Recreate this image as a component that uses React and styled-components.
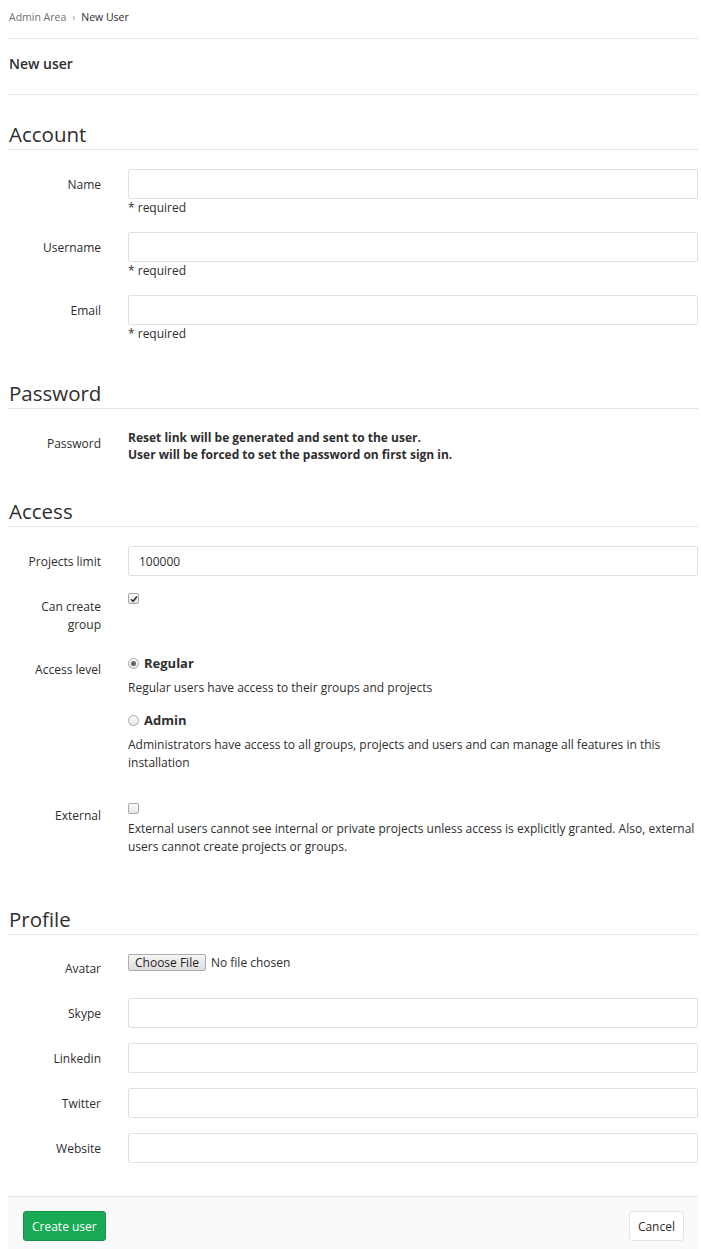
import React from 'react'
import styled, { createGlobalStyle } from 'styled-components'

const GlobalStyle = createGlobalStyle`
  body {
    margin: 0;
    background: #fff;
    color: #2e2e2e;
    font-family: 'Open Sans', 'Noto Sans', sans-serif;
    font-size: 12px;
  }
`

const Page = styled.div`
  padding: 0 3px 0 8px;
`

const Breadcrumbs = styled.div`
  display: flex;
  align-items: flex-start;
  gap: 6px;
  box-sizing: border-box;
  height: 39px;
  padding: 8px 0 0 1px;
  line-height: 18px;
  border-bottom: 1px solid #e5e5e5;
  font-size: 10.5px;
  color: #707070;

  b {
    font-weight: 400;
    color: #2e2e2e;
  }
`

const Chevron = styled.span`
  font-size: 10px;
  color: #999;
`

const PageTitle = styled.h3`
  margin: 0;
  padding: 15px 0 20px 1px;
  font-size: 14px;
  line-height: 20px;
  font-weight: 600;
  border-bottom: 1px solid #e5e5e5;
`

const Form = styled.form`
  display: flex;
  flex-direction: column;
  padding-top: 4px;
`

const SectionTitle = styled.h4`
  margin: ${p => p.$top ?? 23}px 0 19px;
  padding: 0 0 3px 1px;
  font-size: 20.5px;
  line-height: 24px;
  font-weight: 400;
  border-bottom: 1px solid #e5e5e5;
`

const Row = styled.div`
  display: grid;
  grid-template-columns: 93px 1fr;
  column-gap: 27px;
  margin-bottom: ${p => p.$mb ?? 15}px;
`

const Label = styled.label`
  text-align: right;
  padding-top: ${p => p.$pt ?? 7}px;
  line-height: 18px;
`

const Field = styled.div`
  display: flex;
  flex-direction: column;
  align-items: flex-start;
`

const Input = styled.input`
  box-sizing: border-box;
  width: 100%;
  height: 30px;
  padding: 0 10px;
  border: 1px solid #e0e0e0;
  border-radius: 2px;
  font: inherit;
  color: #2e2e2e;
  outline: none;
`

const Help = styled.div`
  line-height: 18px;
  margin-top: ${p => p.$mt ?? 0}px;
`

const Strong = styled.div`
  padding-top: 1px;
  font-weight: 700;
  line-height: 17px;
`

const Box = styled.span`
  display: inline-flex;
  align-items: center;
  justify-content: center;
  box-sizing: border-box;
  width: 11px;
  height: 11px;
  border: 1px solid #a8a8a8;
  border-radius: ${p => (p.$round ? '50%' : '2px')};
  background: linear-gradient(#fcfcfc, #e6e6e6);
  margin-top: ${p => p.$mt ?? 0}px;
  flex-shrink: 0;
`

const Dot = styled.span`
  width: 5px;
  height: 5px;
  border-radius: 50%;
  background: #666;
`

const Choice = styled.div`
  display: flex;
  align-items: center;
  gap: 5px;
  line-height: 18px;
  font-weight: 700;
  font-size: 13px;
`

const ChoiceHelp = styled.div`
  line-height: 18px;
  margin: 7px 0 14px;
`

const FileRow = styled.div`
  display: flex;
  align-items: center;
  gap: 5px;
  height: 17px;
  font-size: 12px;
`

const FileButton = styled.button`
  height: 17px;
  padding: 0 6px;
  border: 1px solid #adadad;
  border-radius: 2px;
  background: linear-gradient(#f5f5f5, #dedede);
  font: inherit;
  line-height: 14px;
  color: #222;
`

const Footer = styled.div`
  display: flex;
  justify-content: space-between;
  align-items: center;
  margin-top: 18px;
  padding: 14px 14px 15px 15px;
  background: #fafafa;
  border-top: 1px solid #e5e5e5;
`

const Button = styled.button`
  height: 30px;
  padding: 0 8px;
  border-radius: 3px;
  font: inherit;
  border: 1px solid ${p => (p.$primary ? '#168f48' : '#e5e5e5')};
  background: ${p => (p.$primary ? '#1aaa55' : '#fff')};
  color: ${p => (p.$primary ? '#fff' : '#2e2e2e')};
`

const Check = () => (
  <svg width="8" height="8" viewBox="0 0 8 8">
    <path d="M1 4.2 L3.1 6.3 L7 1.5" fill="none" stroke="#333" strokeWidth="1.6" />
  </svg>
)

const TextRow = ({ label, help, value }) => (
  <Row>
    <Label>{label}</Label>
    <Field>
      <Input defaultValue={value} />
      {help && <Help>{help}</Help>}
    </Field>
  </Row>
)

export default function App() {
  return (
    <Page>
      <GlobalStyle />
      <Breadcrumbs>
        <span>Admin Area</span>
        <Chevron>›</Chevron>
        <b>New User</b>
      </Breadcrumbs>
      <PageTitle>New user</PageTitle>
      <Form>
        <SectionTitle>Account</SectionTitle>
        <TextRow label="Name" help="* required" />
        <TextRow label="Username" help="* required" />
        <TextRow label="Email" help="* required" />

        <SectionTitle>Password</SectionTitle>
        <Row $mb={13}>
          <Label>Password</Label>
          <Strong>
            Reset link will be generated and sent to the user.
            <br />
            User will be forced to set the password on first sign in.
          </Strong>
        </Row>

        <SectionTitle>Access</SectionTitle>
        <TextRow label="Projects limit" value="100000" />
        <Row $mb={20}>
          <Label>
            Can create
            <br />
            group
          </Label>
          <Field>
            <Box $mt={2}>
              <Check />
            </Box>
          </Field>
        </Row>
        <Row $mb={14}>
          <Label>Access level</Label>
          <Field>
            <Choice>
              <Box $round>
                <Dot />
              </Box>
              Regular
            </Choice>
            <ChoiceHelp>Regular users have access to their groups and projects</ChoiceHelp>
            <Choice>
              <Box $round />
              Admin
            </Choice>
            <ChoiceHelp>
              Administrators have access to all groups, projects and users and can manage all
              features in this installation
            </ChoiceHelp>
          </Field>
        </Row>
        <Row $mb={0}>
          <Label>External</Label>
          <Field>
            <Box $mt={3} />
            <Help $mt={6}>
              External users cannot see internal or private projects unless access is explicitly
              granted. Also, external users cannot create projects or groups.
            </Help>
          </Field>
        </Row>

        <SectionTitle $top={51}>Profile</SectionTitle>
        <Row $mb={20}>
          <Label $pt={6}>Avatar</Label>
          <FileRow>
            <FileButton type="button">Choose File</FileButton>
            <span>No file chosen</span>
          </FileRow>
        </Row>
        <TextRow label="Skype" />
        <TextRow label="Linkedin" />
        <TextRow label="Twitter" />
        <TextRow label="Website" />

        <Footer>
          <Button type="button" $primary>
            Create user
          </Button>
          <Button type="button">Cancel</Button>
        </Footer>
      </Form>
    </Page>
  )
}
